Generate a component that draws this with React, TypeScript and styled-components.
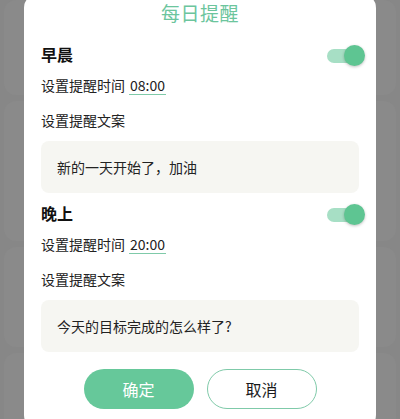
import React, { useState } from "react";
import styled, { createGlobalStyle } from "styled-components";

const Global = createGlobalStyle`
  html, body { margin: 0; padding: 0; }
  body {
    width: 400px;
    height: 419px;
    overflow: hidden;
    font-family: "Noto Sans CJK SC", "Noto Sans", Roboto, sans-serif;
    background: #878787;
  }
`;

const Page = styled.div`
  height: 419px;
  background: #878787;
  display: flex;
  flex-direction: column;
  gap: 6px;
  padding: 0 4px;
  box-sizing: border-box;
`;

const BackCard = styled.div<{ $h: number }>`
  height: ${(p) => p.$h}px;
  background: #8a8a8a;
  border-radius: 12px;
  flex-shrink: 0;
`;

const Overlay = styled.div`
  position: fixed;
  inset: 0;
  display: flex;
  justify-content: center;
  align-items: flex-start;
`;

const Modal = styled.div`
  width: 352px;
  margin-top: -6px;
  background: #ffffff;
  border-radius: 14px;
  padding: 8px 17px 20px 17px;
  box-sizing: border-box;
  display: flex;
  flex-direction: column;
`;

const Title = styled.div`
  text-align: center;
  font-size: 19px;
  line-height: 22px;
  color: #6cc59d;
  letter-spacing: 0.5px;
`;

const Sections = styled.div`
  margin-top: 16px;
  display: flex;
  flex-direction: column;
  gap: 6px;
`;

const Section = styled.div`
  display: flex;
  flex-direction: column;
`;

const HeaderRow = styled.div`
  height: 30px;
  display: flex;
  align-items: center;
  justify-content: space-between;
`;

const Heading = styled.div`
  font-size: 16px;
  font-weight: 700;
  color: #111;
  line-height: 26px;
  margin-top: -3px;
`;

const SwitchTrack = styled.button<{ $on: boolean }>`
  position: relative;
  width: 34px;
  height: 14px;
  border: none;
  padding: 0;
  margin-right: -2px;
  margin-top: 2px;
  border-radius: 7px;
  background: ${(p) => (p.$on ? "#a7dfc5" : "#cfcfcf")};
  cursor: pointer;
`;

const SwitchThumb = styled.span<{ $on: boolean }>`
  position: absolute;
  top: -4px;
  left: ${(p) => (p.$on ? "17px" : "-3px")};
  width: 21px;
  height: 21px;
  border-radius: 50%;
  background: ${(p) => (p.$on ? "#5ec592" : "#f2f2f2")};
  box-shadow: 0 1px 3px rgba(0, 0, 0, 0.25);
`;

const Label = styled.div<{ $mt: number }>`
  margin-top: ${(p) => p.$mt}px;
  font-size: 14px;
  line-height: 20px;
  color: #222;
  display: flex;
  align-items: center;
`;

const TimeValue = styled.span`
  margin-left: 4px;
  padding: 0 1px;
  line-height: 18px;
  border-bottom: 1.5px solid #7fcaa9;
  color: #222;
`;

const MessageBox = styled.div`
  margin-top: 11px;
  height: 52px;
  background: #f6f6f2;
  border-radius: 8px;
  display: flex;
  align-items: center;
  padding: 0 16px;
  font-size: 14px;
  color: #222;
  box-sizing: border-box;
`;

const Buttons = styled.div`
  margin-top: 17px;
  display: flex;
  justify-content: center;
  gap: 13px;
`;

const Btn = styled.button<{ $primary?: boolean }>`
  width: 110px;
  height: 40px;
  border-radius: 20px;
  font-family: inherit;
  font-size: 16px;
  box-sizing: border-box;
  cursor: pointer;
  border: ${(p) => (p.$primary ? "none" : "1.5px solid #7fcaa9")};
  background: ${(p) => (p.$primary ? "#66c89a" : "#ffffff")};
  color: ${(p) => (p.$primary ? "#ffffff" : "#1a1a1a")};
`;

type Reminder = { name: string; time: string; text: string };

const reminders: Reminder[] = [
  { name: "早晨", time: "08:00", text: "新的一天开始了，加油" },
  { name: "晚上", time: "20:00", text: "今天的目标完成的怎么样了?" },
];

function Switch() {
  const [on, setOn] = useState(true);
  return (
    <SwitchTrack $on={on} onClick={() => setOn(!on)}>
      <SwitchThumb $on={on} />
    </SwitchTrack>
  );
}

export default function App() {
  return (
    <>
      <Global />
      <Page>
        <BackCard $h={95} />
        <BackCard $h={140} />
        <BackCard $h={100} />
        <BackCard $h={100} />
      </Page>
      <Overlay>
        <Modal>
          <Title>每日提醒</Title>
          <Sections>
            {reminders.map((r) => (
              <Section key={r.name}>
                <HeaderRow>
                  <Heading>{r.name}</Heading>
                  <Switch />
                </HeaderRow>
                <Label $mt={5}>
                  设置提醒时间
                  <TimeValue>{r.time}</TimeValue>
                </Label>
                <Label $mt={15}>设置提醒文案</Label>
                <MessageBox>{r.text}</MessageBox>
              </Section>
            ))}
          </Sections>
          <Buttons>
            <Btn $primary>确定</Btn>
            <Btn>取消</Btn>
          </Buttons>
        </Modal>
      </Overlay>
    </>
  );
}
